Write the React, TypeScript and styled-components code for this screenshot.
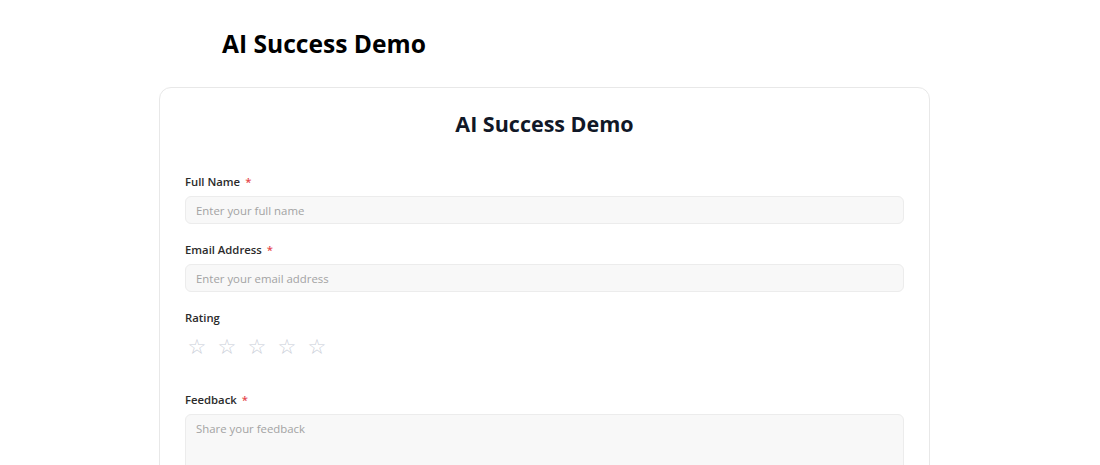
import styled, { createGlobalStyle } from "styled-components";

const GlobalStyle = createGlobalStyle`
  html, body {
    margin: 0;
    padding: 0;
    background: #ffffff;
    font-family: "Open Sans", "Noto Sans", sans-serif;
    color: #111827;
  }
  body {
    padding-right: 11px;
  }
  * {
    box-sizing: border-box;
  }
`;

const Page = styled.div`
  max-width: 771px;
  margin: 0 auto;
  padding: 24px 0 40px;
`;

const PageTitle = styled.h1`
  margin: 0 0 23px 63px;
  font-size: 24.6px;
  font-weight: 700;
  line-height: 40px;
  color: #000;
`;

const Card = styled.div`
  border: 1px solid #e8e8e8;
  border-radius: 12px;
  padding: 19px 25px 32px;
  background: #fff;
`;

const CardTitle = styled.h2`
  margin: 0 0 33px;
  text-align: center;
  font-size: 21.5px;
  font-weight: 700;
  line-height: 34px;
  color: #111827;
`;

const Form = styled.form`
  display: flex;
  flex-direction: column;
  gap: 18px;
`;

const Field = styled.div<{ $extra?: number }>`
  display: flex;
  flex-direction: column;
  gap: 6px;
  margin-bottom: ${(p) => p.$extra ?? 0}px;
`;

const Label = styled.label`
  font-size: 11.3px;
  font-weight: 600;
  line-height: 16px;
  color: #2b2b2b;
`;

const Required = styled.span`
  color: #e5484d;
  margin-left: 5px;
`;

const Input = styled.input`
  width: 100%;
  height: 28px;
  padding: 0 10px;
  border: 1px solid #ececec;
  border-radius: 6px;
  background: #f8f8f8;
  font-family: inherit;
  font-size: 11.4px;
  color: #333;
  outline: none;
  &::placeholder {
    color: #a3a3a3;
  }
`;

const TextArea = styled.textarea`
  width: 100%;
  height: 110px;
  padding: 6px 10px;
  border: 1px solid #ececec;
  border-radius: 6px;
  background: #f8f8f8;
  font-family: inherit;
  font-size: 11.4px;
  color: #333;
  resize: none;
  outline: none;
  &::placeholder {
    color: #a3a3a3;
  }
`;

const Stars = styled.div`
  display: flex;
  gap: 8px;
  padding-left: 1px;
  margin-top: 4px;
`;

const Star = styled.button<{ $on?: boolean }>`
  width: 22px;
  height: 22px;
  padding: 0;
  border: none;
  background: none;
  font-size: 21px;
  line-height: 22px;
  color: ${(p) => (p.$on ? "#f5b301" : "#c9ced8")};
  cursor: pointer;
  font-family: "DejaVu Sans", sans-serif;
`;

const Submit = styled.button`
  height: 38px;
  border: none;
  border-radius: 6px;
  background: #111827;
  color: #fff;
  font-family: inherit;
  font-size: 13px;
  font-weight: 600;
`;

function App() {
  return (
    <>
      <GlobalStyle />
      <Page>
        <PageTitle>AI Success Demo</PageTitle>
        <Card>
          <CardTitle>AI Success Demo</CardTitle>
          <Form onSubmit={(e) => e.preventDefault()}>
            <Field>
              <Label>
                Full Name<Required>*</Required>
              </Label>
              <Input placeholder="Enter your full name" />
            </Field>
            <Field>
              <Label>
                Email Address<Required>*</Required>
              </Label>
              <Input placeholder="Enter your email address" />
            </Field>
            <Field $extra={16}>
              <Label>Rating</Label>
              <Stars>
                {[1, 2, 3, 4, 5].map((n) => (
                  <Star key={n} type="button">
                    ☆
                  </Star>
                ))}
              </Stars>
            </Field>
            <Field>
              <Label>
                Feedback<Required>*</Required>
              </Label>
              <TextArea placeholder="Share your feedback" />
            </Field>
            <Submit type="submit">Submit</Submit>
          </Form>
        </Card>
      </Page>
    </>
  );
}

export default App;
